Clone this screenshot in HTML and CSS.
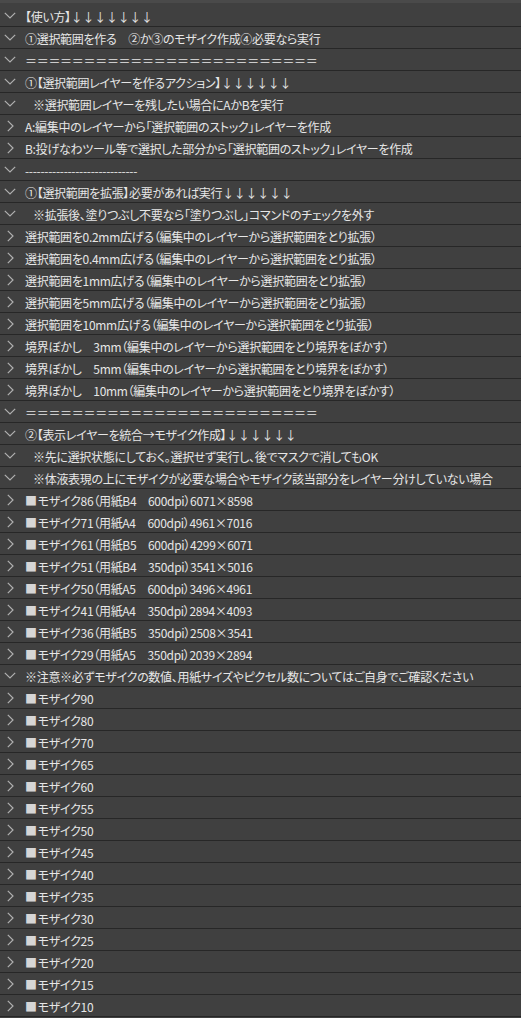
FILE: index.html
```html
<!DOCTYPE html>
<html lang="ja">
<head>
<meta charset="utf-8">
<link rel="stylesheet" href="styles.css">
</head>
<body>
<svg class="defs" width="0" height="0">
  <symbol id="dn" viewBox="0 0 12 7"><polyline points="0.8,0.8 6,6 11.2,0.8" fill="none" stroke="#b0b0b0" stroke-width="1.2"/></symbol>
  <symbol id="rt" viewBox="0 0 7 12"><polyline points="0.8,0.8 6,6 0.8,11.2" fill="none" stroke="#b0b0b0" stroke-width="1.2"/></symbol>
</svg>
<div class="panel">
  <div class="top"></div>
  <div class="row"><span class="chev"><svg class="d"><use href="#dn"/></svg></span><span class="label">【使い方】↓↓↓↓↓↓↓</span></div>
  <div class="row"><span class="chev"><svg class="d"><use href="#dn"/></svg></span><span class="label">①選択範囲を作る　②か③のモザイク作成④必要なら実行</span></div>
  <div class="row"><span class="chev"><svg class="d"><use href="#dn"/></svg></span><span class="label">＝＝＝＝＝＝＝＝＝＝＝＝＝＝＝＝＝＝＝＝＝＝＝＝＝</span></div>
  <div class="row"><span class="chev"><svg class="d"><use href="#dn"/></svg></span><span class="label">①【選択範囲レイヤーを作るアクション】↓↓↓↓↓↓</span></div>
  <div class="row"><span class="chev"><svg class="d"><use href="#dn"/></svg></span><span class="label ind">※選択範囲レイヤーを残したい場合にAかBを実行</span></div>
  <div class="row"><span class="chev"><svg class="r"><use href="#rt"/></svg></span><span class="label">A:編集中のレイヤーから「選択範囲のストック」レイヤーを作成</span></div>
  <div class="row"><span class="chev"><svg class="r"><use href="#rt"/></svg></span><span class="label">B:投げなわツール等で選択した部分から「選択範囲のストック」レイヤーを作成</span></div>
  <div class="row"><span class="chev"><svg class="d"><use href="#dn"/></svg></span><span class="label">-----------------------------</span></div>
  <div class="row"><span class="chev"><svg class="d"><use href="#dn"/></svg></span><span class="label">①【選択範囲を拡張】必要があれば実行↓↓↓↓↓↓</span></div>
  <div class="row"><span class="chev"><svg class="d"><use href="#dn"/></svg></span><span class="label ind">※拡張後、塗りつぶし不要なら「塗りつぶし」コマンドのチェックを外す</span></div>
  <div class="row"><span class="chev"><svg class="r"><use href="#rt"/></svg></span><span class="label">選択範囲を0.2mm広げる（編集中のレイヤーから選択範囲をとり拡張）</span></div>
  <div class="row"><span class="chev"><svg class="r"><use href="#rt"/></svg></span><span class="label">選択範囲を0.4mm広げる（編集中のレイヤーから選択範囲をとり拡張）</span></div>
  <div class="row"><span class="chev"><svg class="r"><use href="#rt"/></svg></span><span class="label">選択範囲を1mm広げる（編集中のレイヤーから選択範囲をとり拡張）</span></div>
  <div class="row"><span class="chev"><svg class="r"><use href="#rt"/></svg></span><span class="label">選択範囲を5mm広げる（編集中のレイヤーから選択範囲をとり拡張）</span></div>
  <div class="row"><span class="chev"><svg class="r"><use href="#rt"/></svg></span><span class="label">選択範囲を10mm広げる（編集中のレイヤーから選択範囲をとり拡張）</span></div>
  <div class="row"><span class="chev"><svg class="r"><use href="#rt"/></svg></span><span class="label">境界ぼかし　3mm（編集中のレイヤーから選択範囲をとり境界をぼかす）</span></div>
  <div class="row"><span class="chev"><svg class="r"><use href="#rt"/></svg></span><span class="label">境界ぼかし　5mm（編集中のレイヤーから選択範囲をとり境界をぼかす）</span></div>
  <div class="row"><span class="chev"><svg class="r"><use href="#rt"/></svg></span><span class="label">境界ぼかし　10mm（編集中のレイヤーから選択範囲をとり境界をぼかす）</span></div>
  <div class="row"><span class="chev"><svg class="d"><use href="#dn"/></svg></span><span class="label">＝＝＝＝＝＝＝＝＝＝＝＝＝＝＝＝＝＝＝＝＝＝＝＝＝</span></div>
  <div class="row"><span class="chev"><svg class="d"><use href="#dn"/></svg></span><span class="label">②【表示レイヤーを統合→モザイク作成】↓↓↓↓↓↓</span></div>
  <div class="row"><span class="chev"><svg class="d"><use href="#dn"/></svg></span><span class="label ind">※先に選択状態にしておく。選択せず実行し、後でマスクで消してもOK</span></div>
  <div class="row"><span class="chev"><svg class="d"><use href="#dn"/></svg></span><span class="label ind">※体液表現の上にモザイクが必要な場合やモザイク該当部分をレイヤー分けしていない場合</span></div>
  <div class="row"><span class="chev"><svg class="r"><use href="#rt"/></svg></span><span class="label"><span class="sq">■</span>モザイク86（用紙B4　600dpi）6071×8598</span></div>
  <div class="row"><span class="chev"><svg class="r"><use href="#rt"/></svg></span><span class="label"><span class="sq">■</span>モザイク71（用紙A4　600dpi）4961×7016</span></div>
  <div class="row"><span class="chev"><svg class="r"><use href="#rt"/></svg></span><span class="label"><span class="sq">■</span>モザイク61（用紙B5　600dpi）4299×6071</span></div>
  <div class="row"><span class="chev"><svg class="r"><use href="#rt"/></svg></span><span class="label"><span class="sq">■</span>モザイク51（用紙B4　350dpi）3541×5016</span></div>
  <div class="row"><span class="chev"><svg class="r"><use href="#rt"/></svg></span><span class="label"><span class="sq">■</span>モザイク50（用紙A5　600dpi）3496×4961</span></div>
  <div class="row"><span class="chev"><svg class="r"><use href="#rt"/></svg></span><span class="label"><span class="sq">■</span>モザイク41（用紙A4　350dpi）2894×4093</span></div>
  <div class="row"><span class="chev"><svg class="r"><use href="#rt"/></svg></span><span class="label"><span class="sq">■</span>モザイク36（用紙B5　350dpi）2508×3541</span></div>
  <div class="row"><span class="chev"><svg class="r"><use href="#rt"/></svg></span><span class="label"><span class="sq">■</span>モザイク29（用紙A5　350dpi）2039×2894</span></div>
  <div class="row"><span class="chev"><svg class="d"><use href="#dn"/></svg></span><span class="label">※注意※必ずモザイクの数値、用紙サイズやピクセル数についてはご自身でご確認ください</span></div>
  <div class="row"><span class="chev"><svg class="r"><use href="#rt"/></svg></span><span class="label"><span class="sq">■</span>モザイク90</span></div>
  <div class="row"><span class="chev"><svg class="r"><use href="#rt"/></svg></span><span class="label"><span class="sq">■</span>モザイク80</span></div>
  <div class="row"><span class="chev"><svg class="r"><use href="#rt"/></svg></span><span class="label"><span class="sq">■</span>モザイク70</span></div>
  <div class="row"><span class="chev"><svg class="r"><use href="#rt"/></svg></span><span class="label"><span class="sq">■</span>モザイク65</span></div>
  <div class="row"><span class="chev"><svg class="r"><use href="#rt"/></svg></span><span class="label"><span class="sq">■</span>モザイク60</span></div>
  <div class="row"><span class="chev"><svg class="r"><use href="#rt"/></svg></span><span class="label"><span class="sq">■</span>モザイク55</span></div>
  <div class="row"><span class="chev"><svg class="r"><use href="#rt"/></svg></span><span class="label"><span class="sq">■</span>モザイク50</span></div>
  <div class="row"><span class="chev"><svg class="r"><use href="#rt"/></svg></span><span class="label"><span class="sq">■</span>モザイク45</span></div>
  <div class="row"><span class="chev"><svg class="r"><use href="#rt"/></svg></span><span class="label"><span class="sq">■</span>モザイク40</span></div>
  <div class="row"><span class="chev"><svg class="r"><use href="#rt"/></svg></span><span class="label"><span class="sq">■</span>モザイク35</span></div>
  <div class="row"><span class="chev"><svg class="r"><use href="#rt"/></svg></span><span class="label"><span class="sq">■</span>モザイク30</span></div>
  <div class="row"><span class="chev"><svg class="r"><use href="#rt"/></svg></span><span class="label"><span class="sq">■</span>モザイク25</span></div>
  <div class="row"><span class="chev"><svg class="r"><use href="#rt"/></svg></span><span class="label"><span class="sq">■</span>モザイク20</span></div>
  <div class="row"><span class="chev"><svg class="r"><use href="#rt"/></svg></span><span class="label"><span class="sq">■</span>モザイク15</span></div>
  <div class="row"><span class="chev"><svg class="r"><use href="#rt"/></svg></span><span class="label"><span class="sq">■</span>モザイク10</span></div>
</div>
</body>
</html>
```
FILE: styles.css
```css
html, body {
  margin: 0;
  padding: 0;
  background: #404040;
}
body {
  font-family: "Noto Sans CJK JP", "Noto Sans", sans-serif;
  font-size: 12px;
  color: #e6e6e6;
  overflow: hidden;
}
.defs {
  position: absolute;
  width: 0;
  height: 0;
}
.panel {
  display: flex;
  flex-direction: column;
}
.top {
  height: 2px;
  border-top: 3px solid #4a4a4a;
}
.row {
  display: flex;
  align-items: center;
  height: 21px;
  border-bottom: 1px solid #272727;
}
.chev {
  width: 20px;
  display: flex;
  justify-content: center;
  align-items: center;
  flex: none;
}
.chev .d {
  width: 12px;
  height: 7px;
}
.chev .r {
  width: 7px;
  height: 12px;
}
.label {
  margin-left: 5px;
  white-space: nowrap;
  line-height: 21px;
  padding-top: 1px;
  letter-spacing: -0.3px;
  font-feature-settings: "palt";
}
.label.ind {
  margin-left: 13px;
}
.sq {
  color: #d6d6d6;
  margin-right: 1px;
}
```
